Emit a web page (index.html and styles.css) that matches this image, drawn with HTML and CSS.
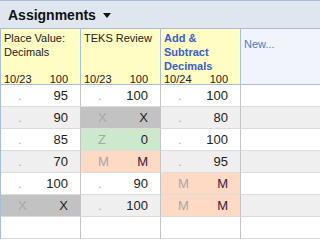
FILE: index.html
```html
<!DOCTYPE html>
<html lang="en">
<head>
    <meta charset="UTF-8">
    <title>Assignments</title>
    <link rel="stylesheet" href="styles.css">
</head>
<body>
    <div class="toolbar">
        <span class="title">Assignments</span>
        <svg class="caret" width="8" height="5" viewBox="0 0 8 5"><path d="M0 0H8L4 5Z" fill="#111"/></svg>
    </div>

    <div class="grid">
        <div class="head">
            <div class="name">Place Value: Decimals</div>
            <div class="meta"><span>10/23</span><span>100</span></div>
        </div>
        <div class="head">
            <div class="name">TEKS Review</div>
            <div class="meta"><span>10/23</span><span>100</span></div>
        </div>
        <div class="head">
            <div class="name link">Add &amp; Subtract Decimals</div>
            <div class="meta"><span>10/24</span><span>100</span></div>
        </div>
        <div class="head new">New...</div>

        <div class="cell"><span class="mark">.</span><span>95</span></div>
        <div class="cell"><span class="mark">.</span><span>100</span></div>
        <div class="cell"><span class="mark">.</span><span>100</span></div>
        <div class="cell"></div>

        <div class="cell alt"><span class="mark">.</span><span>90</span></div>
        <div class="cell excused"><span class="mark">X</span><span>X</span></div>
        <div class="cell alt"><span class="mark">.</span><span>80</span></div>
        <div class="cell alt"></div>

        <div class="cell"><span class="mark">.</span><span>85</span></div>
        <div class="cell zero"><span class="mark">Z</span><span>0</span></div>
        <div class="cell"><span class="mark">.</span><span>100</span></div>
        <div class="cell"></div>

        <div class="cell alt"><span class="mark">.</span><span>70</span></div>
        <div class="cell missing"><span class="mark">M</span><span>M</span></div>
        <div class="cell alt"><span class="mark">.</span><span>95</span></div>
        <div class="cell alt"></div>

        <div class="cell"><span class="mark">.</span><span>100</span></div>
        <div class="cell"><span class="mark">.</span><span>90</span></div>
        <div class="cell missing"><span class="mark">M</span><span>M</span></div>
        <div class="cell"></div>

        <div class="cell excused"><span class="mark">X</span><span>X</span></div>
        <div class="cell alt"><span class="mark">.</span><span>100</span></div>
        <div class="cell missing"><span class="mark">M</span><span>M</span></div>
        <div class="cell alt"></div>

        <div class="cell"></div>
        <div class="cell"></div>
        <div class="cell"></div>
        <div class="cell"></div>
    </div>
</body>
</html>
```

FILE: styles.css
```css
body {
    font-family: "Liberation Sans", Arial, sans-serif;
    margin: 0;
    padding: 0;
    width: 320px;
    height: 240px;
    overflow: hidden;
    background: #fff;
}

.toolbar {
    height: 27px;
    display: flex;
    align-items: center;
    gap: 7px;
    padding-left: 8px;
    background-color: #dfe6ef;
    border-top: 1px solid #a9bfd8;
    border-bottom: 1px solid #a9bfd8;
}

.title {
    font-size: 14px;
    font-weight: bold;
    color: #111;
}

.caret {
    margin-top: 2px;
}

.grid {
    display: grid;
    grid-template-columns: 80px 80px 80px 1fr;
    border-left: 1px solid #a9bfd8;
}

.head {
    height: 56px;
    box-sizing: border-box;
    display: flex;
    flex-direction: column;
    justify-content: space-between;
    padding: 2px 0 0 3px;
    font-size: 11px;
    line-height: 14px;
    color: #222;
    background-color: #fffcc4;
    border-right: 1px solid #a9bfd8;
    border-bottom: 1px solid #a9bfd8;
}

.head .link {
    color: #3a5ccc;
    font-weight: bold;
}

.head .meta {
    display: flex;
    justify-content: space-between;
    margin-bottom: -1px;
    padding-right: 12px;
    line-height: 12px;
    color: #2a1a2a;
}

.head.new {
    justify-content: flex-start;
    padding: 8px 0 0 3px;
    color: #4a7cc8;
    background-color: #f1f5fb;
    border-right: none;
}

.cell {
    height: 22px;
    box-sizing: border-box;
    display: flex;
    justify-content: space-between;
    align-items: center;
    padding: 0 12px 0 17px;
    font-size: 13px;
    line-height: 21px;
    color: #222;
    border-right: 1px solid #c4c4c4;
    border-bottom: 1px solid #dcdcdc;
}

.cell:nth-child(4n) {
    border-right: none;
}

.cell .mark {
    color: #c8ab90;
}

.alt {
    background-color: #efefef;
}

.excused {
    background-color: #c2c2c2;
}

.zero {
    background-color: #cde9cd;
}

.missing {
    background-color: #fedac4;
}

.excused .mark,
.zero .mark,
.missing .mark {
    color: #a8a8a8;
}

.missing span:last-child {
    color: #3a1a3a;
}
```
